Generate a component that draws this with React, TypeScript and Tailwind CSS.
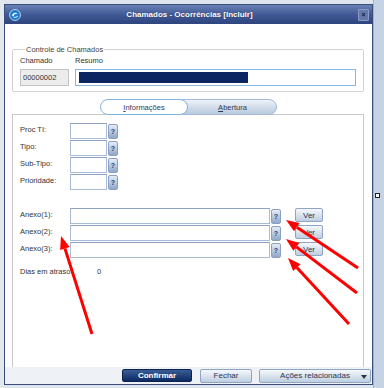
const arrows = [
  { x1: 358, y1: 268, x2: 286, y2: 220 },
  { x1: 357, y1: 293, x2: 286, y2: 239 },
  { x1: 349, y1: 324, x2: 288, y2: 258 },
  { x1: 92, y1: 334, x2: 61, y2: 236 },
];

function Arrow({ x1, y1, x2, y2 }: { x1: number; y1: number; x2: number; y2: number }) {
  const len = Math.hypot(x2 - x1, y2 - y1);
  const ux = (x2 - x1) / len;
  const uy = (y2 - y1) / len;
  const bx = x2 - ux * 13;
  const by = y2 - uy * 13;
  const pts = `${x2},${y2} ${bx - uy * 5},${by + ux * 5} ${bx + uy * 5},${by - ux * 5}`;
  return (
    <g>
      <line x1={x1} y1={y1} x2={bx} y2={by} stroke="#ff0000" strokeWidth={3} />
      <polygon points={pts} fill="#ff0000" />
    </g>
  );
}

function LookupBtn() {
  return (
    <div className="mt-[1px] flex h-[15px] w-[10px] items-center justify-center rounded-[2px] border border-[#8ba0c0] bg-gradient-to-b from-[#e6edf6] to-[#8fa7c7] text-[7px] font-bold leading-none text-[#1f3f78]">
      ?
    </div>
  );
}

function Field({ w }: { w: string }) {
  return <div className={`h-[16px] ${w} border border-[#a9bcd8] border-t-[#8ea3c4] bg-white`} />;
}

function GrayBtn({ children, className }: { children: React.ReactNode; className: string }) {
  return (
    <div
      className={`flex items-center justify-center rounded-[2px] border border-[#8da4c4] bg-gradient-to-b from-[#f6f8fb] to-[#bfcee1] text-[#2a3550] ${className}`}
    >
      {children}
    </div>
  );
}

const smallFields = ["Proc TI:", "Tipo:", "Sub-Tipo:", "Prioridade:"];
const anexos = ["Anexo(1):", "Anexo(2):", "Anexo(3):"];

export default function App() {
  return (
    <div className="relative h-[388px] w-[384px] overflow-hidden bg-[#dfe5ee] font-['Liberation_Sans',Arial,sans-serif] text-[7.5px] leading-[9px] text-[#333]">
      <div className="flex h-full">
        <div className="w-[4px] bg-[#e3e8ef]" />
        {/* window */}
        <div className="mt-[4px] flex h-[381px] w-[369px] flex-col border border-[#3a4d7a] bg-white">
          {/* title bar */}
          <div className="relative flex h-[19px] items-center bg-gradient-to-b from-[#6981b4] via-[#415a96] to-[#2d447e]">
            <svg viewBox="0 0 12 12" className="ml-[4px] h-[12px] w-[12px]">
              <circle cx="6" cy="6" r="5.5" fill="#1c7dd4" stroke="#d8e4f4" strokeWidth="0.8" />
              <path d="M3 6.5 C3.5 3.5 7.5 3 8.8 5 C7.5 4.2 5 4.6 4.6 7.2 Z" fill="#fff" />
              <path d="M4.5 8 C6 8.8 8 8.2 9 6.8" stroke="#fff" strokeWidth="0.9" fill="none" />
            </svg>
            <div className="flex-1 text-center text-[8px] font-bold text-white [text-shadow:0_0_1px_#1a2a55]">
              Chamados - Ocorrências [Incluir]
            </div>
            <div className="mr-[3px] flex h-[12px] w-[11px] items-center justify-center rounded-[1px] border border-[#8a9cc6] bg-[#6479aa] text-[7px] font-bold leading-none text-[#0e1b3c]">
              ×
            </div>
          </div>

          {/* body */}
          <div className="flex flex-1 flex-col">
            <fieldset className="ml-[7px] mt-[21px] w-[352px] rounded-[2px] border border-[#d2d2d2] px-[7px] pb-[5px] pt-[2px]">
              <legend className="ml-[5px] px-[1px] leading-[9px] text-[#444]">Controle de Chamados</legend>
              <div className="flex gap-[6px]">
                <div className="flex w-[49px] flex-col">
                  <span>Chamado</span>
                  <div className="mt-[4px] flex h-[17px] items-center border border-[#c4c4c4] bg-[#ececec] px-[2px]">
                    00000002
                  </div>
                </div>
                <div className="flex w-[281px] flex-col">
                  <span>Resumo</span>
                  <div className="mt-[4px] flex h-[17px] items-center border border-[#86b6e4] bg-white pl-[3px]">
                    <div className="h-[11px] w-[169px] bg-[#0b2462]" />
                  </div>
                </div>
              </div>
            </fieldset>

            {/* tabs */}
            <div className="relative z-10 -mb-[1px] ml-[95px] mt-[7px] flex h-[16px]">
              <div className="relative z-10 flex w-[88px] items-center justify-center rounded-[8px] border border-[#7fb3e2] bg-white text-[#2e3a55]">
                <span>
                  <span className="underline">I</span>nformações
                </span>
              </div>
              <div className="-ml-[8px] flex w-[97px] items-center justify-center rounded-r-[8px] border border-[#a2bad8] bg-gradient-to-b from-[#eef2f8] to-[#b9cadf] pl-[8px] text-[#2e3a55]">
                <span>
                  <span className="underline">A</span>bertura
                </span>
              </div>
            </div>

            {/* panel */}
            <div className="ml-[7px] flex w-[352px] flex-1 flex-col border-x border-t border-[#c9c9c9] pl-[7px] pt-[8px]">
              <div className="flex flex-col gap-[1px]">
                {smallFields.map((l) => (
                  <div key={l} className="flex h-[16px] items-start">
                    <span className="w-[50px] pt-[2px]">{l}</span>
                    <Field w="w-[37px]" />
                    <div className="ml-[1px]">
                      <LookupBtn />
                    </div>
                  </div>
                ))}
              </div>

              <div className="mt-[18px] flex flex-col gap-[1px]">
                {anexos.map((l) => (
                  <div key={l} className="flex h-[16px] items-start">
                    <span className="w-[50px] pt-[2px]">{l}</span>
                    <Field w="w-[200px]" />
                    <div className="ml-[1px]">
                      <LookupBtn />
                    </div>
                    <GrayBtn className="ml-[14px] h-[14px] w-[28px] text-[8px]">Ver</GrayBtn>
                  </div>
                ))}
              </div>

              <div className="mt-[9px] flex">
                <span className="w-[77px]">Dias em atraso:</span>
                <span>0</span>
              </div>
            </div>

            {/* bottom bar */}
            <div className="flex h-[17px] items-center bg-[#eef1f6]">
              <div className="ml-[117px] flex h-[13px] w-[70px] items-center justify-center rounded-[2px] border border-[#0b2250] bg-gradient-to-b from-[#3a5d96] to-[#0d2a62] text-[8px] font-bold text-white">
                Confirmar
              </div>
              <GrayBtn className="ml-[8px] h-[14px] w-[52px] text-[8px]">Fechar</GrayBtn>
              <GrayBtn className="relative ml-[7px] h-[14px] w-[112px] text-[8px]">
                Ações relacionadas
                <svg viewBox="0 0 6 4" className="absolute right-[3px] top-[5px] h-[4px] w-[6px]">
                  <path d="M0 0 H6 L3 4 Z" fill="#2a3550" />
                </svg>
              </GrayBtn>
            </div>
          </div>
        </div>
        <div className="flex-1 border-l border-[#9fb3cc] bg-[#c5d3e4]" />
      </div>

      <div className="absolute left-[375px] top-[193px] h-[5px] w-[5px] border border-[#222] bg-white" />

      <svg className="pointer-events-none absolute inset-0" width={384} height={388}>
        {arrows.map((a, i) => (
          <Arrow key={i} {...a} />
        ))}
      </svg>
    </div>
  );
}
